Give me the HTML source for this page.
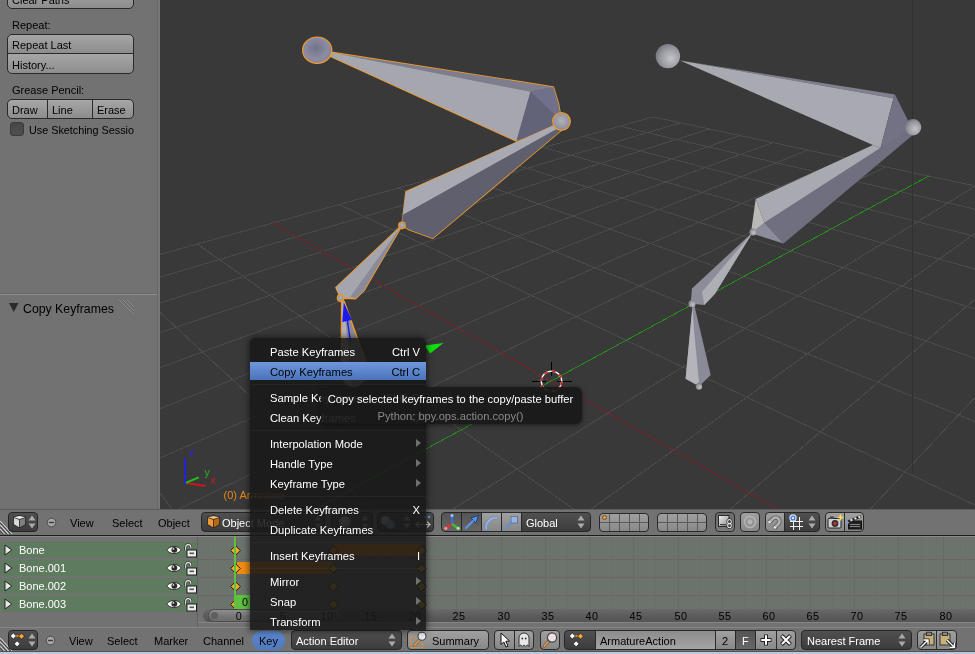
<!DOCTYPE html>
<html><head><meta charset="utf-8"><title>Blender</title><style>
*{box-sizing:border-box;margin:0;padding:0}
html,body{width:975px;height:654px;overflow:hidden;background:#727272}
body{position:relative;font-family:"Liberation Sans",sans-serif;font-size:11px;color:#000;line-height:1}
.a{position:absolute}
.t{position:absolute;white-space:pre;line-height:12px;height:12px}
.btn{position:absolute;border:1px solid #2a2a2a;background:linear-gradient(#a6a6a6,#8d8d8d);}
.dk{position:absolute;border:1px solid #262626;background:linear-gradient(#505050,#3c3c3c);color:#fff}
.lt{position:absolute;border:1px solid #2a2a2a;background:linear-gradient(#a0a0a0,#888888)}
.hdr{position:absolute;left:0;width:975px;background:#727272}
.row{position:absolute;left:0;width:197px;height:16px;background:#5f7b5f;border-radius:5px 0 0 5px}
.row .t{color:#fff;left:19px;top:2px}
.mi{position:absolute;left:0;width:176px;height:20px;color:#fff;font-size:11.2px}
.mi .t{left:20px;top:4px}
.mi .k{position:absolute;right:6px;top:4px;line-height:12px;white-space:pre}
.mi .ar{position:absolute;right:5px;top:5px;width:0;height:0;border-left:5px solid #707070;border-top:4.5px solid transparent;border-bottom:4.5px solid transparent}
.sep{position:absolute;left:0;width:176px;height:1px;background:rgba(60,60,60,.3)}
</style></head><body><div id="root" style="position:absolute;left:0;top:0;width:975px;height:654px;will-change:transform">

<div class="a" style="left:0;top:0;width:158px;height:509px;background:#727272;overflow:hidden">
 <div class="btn" style="left:7px;top:-12px;width:127px;height:21px;border-radius:5px"><span class="t" style="left:4px;top:5px">Clear Paths</span></div>
 <span class="t" style="left:12px;top:19px">Repeat:</span>
 <div class="btn" style="left:7px;top:34px;width:127px;height:20px;border-radius:5px 5px 0 0"><span class="t" style="left:4px;top:4px">Repeat Last</span></div>
 <div class="btn" style="left:7px;top:53px;width:127px;height:21px;border-radius:0 0 5px 5px"><span class="t" style="left:4px;top:5px">History...</span></div>
 <span class="t" style="left:12px;top:84px">Grease Pencil:</span>
 <div class="btn" style="left:7px;top:99px;width:41px;height:20px;border-radius:5px 0 0 5px"><span class="t" style="left:4px;top:4px">Draw</span></div>
 <div class="btn" style="left:47px;top:99px;width:46px;height:20px;border-radius:0"><span class="t" style="left:4px;top:4px">Line</span></div>
 <div class="btn" style="left:92px;top:99px;width:42px;height:20px;border-radius:0 5px 5px 0"><span class="t" style="left:4px;top:4px">Erase</span></div>
 <div class="a" style="left:10px;top:122px;width:14px;height:14px;border-radius:3px;border:1px solid #3a3a3a;background:linear-gradient(#464646,#505050)"></div>
 <div class="a" style="left:29px;top:124px;width:105px;height:14px;overflow:hidden"><span class="t" style="left:0;top:0;font-size:10.8px">Use Sketching Session</span></div>
 <div class="a" style="left:0;top:294px;width:158px;height:1px;background:#8c8c8c"></div>
 <div class="a" style="left:0;top:293px;width:158px;height:1px;background:#6a6a6a"></div>
 <svg class="a" style="left:8px;top:302px" width="12" height="11" viewBox="0 0 12 11"><path d="M1 1 H10.5 L5.75 10 Z" fill="#2b2b2b"/></svg>
 <span class="t" style="left:23px;top:302px;font-size:12.3px;line-height:14px;height:14px">Copy Keyframes</span>
 <svg class="a" style="left:118px;top:299px" width="18" height="18" viewBox="0 0 18 18"><path d="M1 1 L16 16 M5 1 L16 12 M9 1 L16 8" stroke="#8e8e8e" stroke-width="1" fill="none"/><path d="M1 2 L16 17 M5 2 L16 13 M9 2 L16 9" stroke="#5e5e5e" stroke-width="1" fill="none" opacity=".6"/></svg>
</div>
<div class="a" style="left:157px;top:0;width:1px;height:509px;background:#686868"></div>
<div class="a" style="left:158px;top:0;width:2px;height:509px;background:#787878"></div>

<svg id="vp" width="815" height="509" viewBox="0 0 815 509" style="position:absolute;left:160px;top:0;background:#393939;font-family:'Liberation Sans',sans-serif">
<defs>
<radialGradient id="sph" cx="0.45" cy="0.42" r="0.7"><stop offset="0" stop-color="#727288"/><stop offset="0.6" stop-color="#8c8ca4"/><stop offset="1" stop-color="#7c7c94"/></radialGradient>
<radialGradient id="sphb" cx="0.5" cy="0.45" r="0.7"><stop offset="0" stop-color="#b2b2b8"/><stop offset="0.6" stop-color="#9494a2"/><stop offset="1" stop-color="#6c6c82"/></radialGradient>
<radialGradient id="sph2" cx="0.62" cy="0.6" r="0.8"><stop offset="0" stop-color="#c4c4c8"/><stop offset="0.5" stop-color="#9a9aa2"/><stop offset="1" stop-color="#62626e"/></radialGradient>
</defs>
<g stroke-width="1" shape-rendering="crispEdges"><line x1="-977.2" y1="526.9" x2="493.3" y2="116.9" stroke="#4a4a4a"/><line x1="-977.2" y1="526.9" x2="-14997.7" y2="15857.6" stroke="#4a4a4a"/><line x1="-1027.3" y1="581.6" x2="520.6" y2="122.8" stroke="#4a4a4a"/><line x1="-741.7" y1="461.2" x2="-9785.1" y2="15785.1" stroke="#4a4a4a"/><line x1="-1087.2" y1="647.1" x2="549.5" y2="129.0" stroke="#4a4a4a"/><line x1="-550.6" y1="408.0" x2="-4572.5" y2="15712.6" stroke="#4a4a4a"/><line x1="-1160.3" y1="727.1" x2="580.3" y2="135.6" stroke="#4a4a4a"/><line x1="-392.5" y1="363.9" x2="640.1" y2="15640.1" stroke="#4a4a4a"/><line x1="-1251.5" y1="826.8" x2="613.0" y2="142.6" stroke="#4a4a4a"/><line x1="-259.4" y1="326.8" x2="1259.5" y2="4114.4" stroke="#4a4a4a"/><line x1="-1368.4" y1="954.6" x2="648.0" y2="150.1" stroke="#4a4a4a"/><line x1="-146.0" y1="295.1" x2="1270.4" y2="2215.4" stroke="#4a4a4a"/><line x1="-1523.6" y1="1124.4" x2="685.5" y2="158.2" stroke="#4a4a4a"/><line x1="-48.1" y1="267.8" x2="1274.5" y2="1495.5" stroke="#4a4a4a"/><line x1="-1739.9" y1="1360.8" x2="725.6" y2="166.8" stroke="#4a4a4a"/><line x1="37.3" y1="244.0" x2="1276.6" y2="1116.7" stroke="#4a4a4a"/><line x1="-2592.0" y1="2292.5" x2="815.3" y2="186.0" stroke="#4a4a4a"/><line x1="179.0" y1="204.5" x2="1278.9" y2="724.4" stroke="#4a4a4a"/><line x1="-3628.9" y1="3426.4" x2="865.7" y2="196.9" stroke="#4a4a4a"/><line x1="238.3" y1="188.0" x2="1279.5" y2="609.8" stroke="#4a4a4a"/><line x1="-6564.8" y1="6636.6" x2="920.3" y2="208.6" stroke="#4a4a4a"/><line x1="291.7" y1="173.1" x2="1280.0" y2="523.0" stroke="#4a4a4a"/><line x1="-13633.3" y1="15838.6" x2="979.7" y2="221.3" stroke="#4a4a4a"/><line x1="339.8" y1="159.7" x2="1280.4" y2="455.1" stroke="#4a4a4a"/><line x1="-9926.5" y1="15787.1" x2="1044.7" y2="235.3" stroke="#4a4a4a"/><line x1="383.5" y1="147.5" x2="1280.7" y2="400.4" stroke="#4a4a4a"/><line x1="-6219.8" y1="15735.5" x2="1115.9" y2="250.6" stroke="#4a4a4a"/><line x1="423.4" y1="136.4" x2="1281.0" y2="355.5" stroke="#4a4a4a"/><line x1="-2513.0" y1="15683.9" x2="1194.4" y2="267.4" stroke="#4a4a4a"/><line x1="459.8" y1="126.2" x2="1281.2" y2="318.0" stroke="#4a4a4a"/><line x1="1193.7" y1="15632.3" x2="1281.4" y2="286.1" stroke="#4a4a4a"/><line x1="493.3" y1="116.9" x2="1281.4" y2="286.1" stroke="#4a4a4a"/><line x1="-2061.8" y1="1712.8" x2="768.8" y2="176.0" stroke="#258c1c"/><line x1="112.4" y1="223.1" x2="1278.0" y2="883.0" stroke="#742428"/></g>
<line x1="752.5" y1="0" x2="752.5" y2="473" stroke="#303030" shape-rendering="crispEdges"/>
<polygon points="720.5,148.0 604.4,222.8 623.5,243.4 754.0,134.0 748.0,126.0" fill="#6f6f80" /><polygon points="604.4,222.8 592.9,231.9 595.0,234.5 623.5,243.4" fill="#8c8c9a" /><polygon points="712.9,145.0 595.7,199.0 604.4,222.8 720.5,148.0" fill="#a9a9b1" /><polygon points="595.7,199.0 604.4,222.8 592.9,231.9 591.5,229.0" fill="#b9b9b8" /><polygon points="520.0,60.5 735.0,94.5 733.5,98.3" fill="#80808f" /><polygon points="520.0,60.5 733.5,98.3 720.5,148.0 712.9,145.0" fill="#a9a9b1" /><polygon points="735.0,94.5 748.0,120.5 753.1,127.3 746.0,131.5 720.5,148.0 733.5,98.3" fill="#727284" /><polygon points="592.9,231.9 532.0,288.5 530.9,300.8 532.0,303.7 544.3,305.0 555.0,293.8" fill="#8d8d9a" /><polygon points="592.9,231.9 542.0,292.0 544.3,305.0 555.0,293.8" fill="#aeaeb5" /><polygon points="532.5,306.0 525.6,378.7 536.0,384.5 541.0,384.5 550.7,375.0 534.5,306.0" fill="#8a8a98" /><polygon points="532.5,306.0 525.6,378.7 536.0,384.5 539.0,382.0 534.0,330.0" fill="#b4b4ba" /><ellipse cx="507.9" cy="56.1" rx="12.2" ry="12.2" fill="url(#sph2)"/><ellipse cx="753.1" cy="127.3" rx="8.2" ry="8.2" fill="url(#sph2)"/><ellipse cx="592.9" cy="231.9" rx="3.5" ry="3.5" fill="url(#sph2)"/><ellipse cx="532.0" cy="303.7" rx="3.6" ry="3.6" fill="url(#sph2)"/><ellipse cx="539.0" cy="386.5" rx="3.2" ry="3.2" fill="url(#sph2)"/>
<polygon points="171.5,52.4 393.3,87.0 398.5,104.0 401.5,121.5 356.5,141.0 170.5,56.3" fill="#666676" stroke="#f19a2a" stroke-width="1.6" stroke-linejoin="round"/><polygon points="171.5,52.4 393.3,87.0 370.5,91.8" fill="#7d7d8d" /><polygon points="171.5,52.4 370.5,91.8 356.5,141.0 170.5,56.3" fill="#a6a6ae" /><polygon points="370.5,91.8 393.3,87.0 398.5,104.0 401.5,121.5" fill="#70708a" /><polygon points="370.5,91.8 401.5,121.5 398.0,127.0 356.5,141.0" fill="#626278" /><polygon points="398.0,124.0 246.0,191.8 242.0,225.3 249.4,229.8 272.8,238.2 404.0,128.0" fill="#5e5e6c" stroke="#f19a2a" stroke-width="1.6" stroke-linejoin="round"/><polygon points="398.0,123.5 246.0,191.8 242.8,215.0 403.0,125.5" fill="#a9a9b1" /><polygon points="246.0,191.8 242.8,215.0 242.0,225.3" fill="#8d8d9a" /><polygon points="403.0,126.0 242.8,215.0 242.0,225.3 249.4,229.8 272.8,238.2 404.0,128.0" fill="#5f5f6d" /><polygon points="242.0,225.3 176.0,287.5 180.6,298.0 195.5,298.8 204.0,290.5" fill="#a2a2aa" stroke="#f19a2a" stroke-width="1.6" stroke-linejoin="round"/><polygon points="242.0,225.3 176.0,287.5 180.6,298.0 190.5,296.5" fill="#a5a5ad" /><polygon points="242.0,225.3 190.5,296.5 195.5,298.8 204.0,290.5" fill="#8a8a98" /><polygon points="181.6,301.0 181.2,378.0 190.0,387.0 196.0,387.0 210.5,375.0 184.3,301.4" fill="#8c8c98" stroke="#f19a2a" stroke-width="1.4" stroke-linejoin="round"/><polygon points="182.2,302.0 181.9,378.0 190.0,386.5 192.0,385.0 183.6,302.0" fill="#b0b0b6" /><ellipse cx="157.2" cy="50.2" rx="14.6" ry="13.2" fill="url(#sph)" stroke="#f19a2a" stroke-width="1.2"/><ellipse cx="401.5" cy="121.5" rx="8.8" ry="8.8" fill="url(#sphb)" stroke="#f19a2a" stroke-width="1.2"/><ellipse cx="242.0" cy="225.3" rx="3.3" ry="3.3" fill="url(#sphb)" stroke="#f19a2a" stroke-width="1.2"/><ellipse cx="180.6" cy="298.0" rx="3.3" ry="3.3" fill="url(#sphb)" stroke="#f19a2a" stroke-width="1.2"/><line x1="187.3" y1="320" x2="190.60000000000002" y2="342" stroke="#2020e8" stroke-width="1.5"/><polygon points="183.8,302.6 182.3,321.9 191.9,320.0" fill="#1a1af0" /><polygon points="283.5,343.0 264.5,345.5 270.0,353.5" fill="#10e010" />
<g fill="none" shape-rendering="crispEdges"><line x1="371.5" y1="381.5" x2="386.0" y2="381.5" stroke="#000"/><line x1="397.0" y1="381.5" x2="411.5" y2="381.5" stroke="#000"/><line x1="391.5" y1="361.5" x2="391.5" y2="376.0" stroke="#000"/><line x1="391.5" y1="387.0" x2="391.5" y2="401.5" stroke="#000"/></g>
<circle cx="391.5" cy="381.3" r="10.2" fill="none" stroke="#fff" stroke-width="1.4"/><circle cx="391.5" cy="381.3" r="10.2" fill="none" stroke="#e81818" stroke-width="1.4" stroke-dasharray="4 4"/>
<line x1="25.099999999999994" y1="483.1" x2="45.69999999999999" y2="486" stroke="#c81818" stroke-width="2"/>
<line x1="25.099999999999994" y1="483.1" x2="38.80000000000001" y2="477.4" stroke="#18c818" stroke-width="2"/>
<line x1="25.099999999999994" y1="484.1" x2="25.099999999999994" y2="458" stroke="#2222d8" stroke-width="2"/>
<text x="29" y="456" fill="#2a2adc" font-size="10.5">z</text><text x="44.5" y="475.5" fill="#22b422" font-size="10.5">y</text><text x="50.5" y="484" fill="#c81c1c" font-size="10.5">x</text>
<text x="63.5" y="499" fill="#e8861a" font-size="11">(0) Armature</text>
</svg>

<div class="hdr" style="top:509px;height:26px"></div>
<div class="a" style="left:0;top:509px;width:975px;height:1px;background:#5c5c5c"></div>
<div class="a" style="left:0;top:535px;width:975px;height:1px;background:#1c1c1c"></div>
<svg class="a" style="left:0;top:521px" width="14" height="14" viewBox="0 0 14 14"><path d="M0 0 L12 13 M0 4 L8.5 13 M0 8 L4.5 13" stroke="#d8d8d8" stroke-width="1.1" fill="none"/><path d="M0 1.5 L11 13.5 M0 5.5 L7.5 13.5 M0 9.5 L3.5 13.5" stroke="#3a3a3a" stroke-width="1" fill="none"/></svg>
<div class="dk" style="left:8px;top:512px;width:30px;height:20px;border-radius:4px"></div>
<svg class="a" style="left:12px;top:514px" width="15" height="15" viewBox="0 0 14 14"><path d="M1 2.5 L7 1 L13 2.5 V10 L7 13.5 L1 10 Z" fill="#2a2a2a"/><path d="M1.8 3 L7 1.8 L12.2 3 L7 4.6 Z" fill="#f0f0f0"/><path d="M1.8 3.8 L6.6 5.3 V12.4 L1.8 9.6 Z" fill="#d8d8d8"/><path d="M12.2 3.8 L7.4 5.3 V12.4 L12.2 9.6 Z" fill="#808080"/></svg>
<svg class="a" style="left:28px;top:515px" width="8" height="14" viewBox="0 0 8 14"><path d="M4 0.5 L7.5 5.5 H0.5 Z M4 13.5 L7.5 8.5 H0.5 Z" fill="#aaaaaa"/></svg>
<svg class="a" style="left:46px;top:517px" width="11" height="11" viewBox="0 0 11 11"><circle cx="5.5" cy="5.5" r="4.3" fill="#a8a8a8" stroke="#444" stroke-width="0.9"/><rect x="2.9" y="4.8" width="5.2" height="1.4" fill="#3a3a3a"/></svg>
<span class="t" style="left:70px;top:517px">View</span>
<span class="t" style="left:112px;top:517px">Select</span>
<span class="t" style="left:158px;top:517px">Object</span>
<div class="dk" style="left:201px;top:512px;width:124px;height:20px;border-radius:4px"><span class="t" style="left:20px;top:4px">Object Mode</span></div>
<svg class="a" style="left:206px;top:514px" width="15" height="15" viewBox="0 0 14 14"><path d="M1 2.5 L7 1 L13 2.5 V10 L7 13.5 L1 10 Z" fill="#2a2a2a"/><path d="M1.8 3 L7 1.8 L12.2 3 L7 4.6 Z" fill="#f6c080"/><path d="M1.8 3.8 L6.6 5.3 V12.4 L1.8 9.6 Z" fill="#f09830"/><path d="M12.2 3.8 L7.4 5.3 V12.4 L12.2 9.6 Z" fill="#b86a10"/></svg>
<svg class="a" style="left:314px;top:515px" width="8" height="14" viewBox="0 0 8 14"><path d="M4 0.5 L7.5 5.5 H0.5 Z M4 13.5 L7.5 8.5 H0.5 Z" fill="#aaaaaa"/></svg>
<div class="dk" style="left:331px;top:512px;width:42px;height:20px;border-radius:4px"></div>
<div class="a" style="left:339px;top:516px;width:12px;height:12px;border-radius:6px;background:radial-gradient(circle at 40% 35%,#eee,#888)"></div>
<svg class="a" style="left:361px;top:515px" width="8" height="14" viewBox="0 0 8 14"><path d="M4 0.5 L7.5 5.5 H0.5 Z M4 13.5 L7.5 8.5 H0.5 Z" fill="#aaaaaa"/></svg>
<div class="dk" style="left:377px;top:512px;width:36px;height:20px;border-radius:4px 0 0 4px"></div>
<div class="a" style="left:381px;top:516px;width:9px;height:9px;border-radius:5px;background:#c8c8c8"></div><div class="a" style="left:386px;top:520px;width:9px;height:9px;border-radius:5px;background:#88a8d8"></div>
<svg class="a" style="left:403px;top:515px" width="8" height="14" viewBox="0 0 8 14"><path d="M4 0.5 L7.5 5.5 H0.5 Z M4 13.5 L7.5 8.5 H0.5 Z" fill="#aaaaaa"/></svg>
<div class="dk" style="left:412px;top:512px;width:22px;height:20px;border-radius:0 4px 4px 0"></div>
<svg class="a" style="left:414px;top:514px" width="18" height="16" viewBox="0 0 18 16"><path d="M2 10.5 H16 M5 7.5 L2 10.5 L5 13.5 M13 7.5 L16 10.5 L13 13.5" stroke="#d0d0d0" stroke-width="1.2" fill="none"/><circle cx="11" cy="3" r="1.3" fill="#6aa0e8"/><circle cx="15" cy="3" r="1.3" fill="#6aa0e8"/></svg>

<div class="dk" style="left:441px;top:512px;width:21px;height:20px;border-radius:4px 0 0 4px;background:linear-gradient(#555,#666)"></div>
<div class="dk" style="left:461px;top:512px;width:21px;height:20px;border-radius:0;background:linear-gradient(#555,#666)"></div>
<div class="lt" style="left:481px;top:512px;width:21px;height:20px;border-radius:0"></div>
<div class="lt" style="left:501px;top:512px;width:21px;height:20px;border-radius:0"></div>
<svg class="a" style="left:443px;top:513px" width="18" height="18" viewBox="0 0 18 18"><path d="M9 11 V2" stroke="#3c6ce0" stroke-width="2.2"/><path d="M9 11 L2.5 15.5" stroke="#e03030" stroke-width="2.2"/><path d="M9 11 L15.5 15.5" stroke="#40c030" stroke-width="2.2"/><circle cx="9" cy="2.5" r="1.6" fill="#a0c0ff"/><circle cx="2.8" cy="15.3" r="1.6" fill="#ff9090"/><circle cx="15.2" cy="15.3" r="1.6" fill="#a0f090"/></svg>
<svg class="a" style="left:463px;top:514px" width="17" height="17" viewBox="0 0 17 17"><path d="M2 15 L4 13 L10.5 6.5 L8 4 L15.5 1.5 L13 9 L10.5 6.5" fill="#5a94e8" stroke="#1c3c80" stroke-width="1"/><path d="M2.2 14.8 L10.5 6.5" stroke="#5a94e8" stroke-width="2.2"/></svg>
<svg class="a" style="left:483px;top:514px" width="17" height="17" viewBox="0 0 17 17"><path d="M3 15 C3 8 7 4 14 3.5" stroke="#6f8fc0" stroke-width="3.2" fill="none" stroke-linecap="round"/><path d="M3 15 C3 8 7 4 14 3.5" stroke="#9ab4dc" stroke-width="1.6" fill="none" stroke-linecap="round"/></svg>
<svg class="a" style="left:503px;top:514px" width="17" height="17" viewBox="0 0 17 17"><path d="M2.5 14.5 L9 8" stroke="#6f8fc0" stroke-width="3" stroke-linecap="round"/><rect x="8" y="2.5" width="6.5" height="6.5" fill="#9ab4dc" stroke="#5a78a8" stroke-width="1"/></svg>
<div class="dk" style="left:521px;top:512px;width:70px;height:20px;border-radius:0 4px 4px 0"><span class="t" style="left:4px;top:4px">Global</span></div>
<svg class="a" style="left:577px;top:515px" width="8" height="14" viewBox="0 0 8 14"><path d="M4 0.5 L7.5 5.5 H0.5 Z M4 13.5 L7.5 8.5 H0.5 Z" fill="#aaaaaa"/></svg>
<div class="lt" style="left:599px;top:513px;width:50px;height:19px;border-radius:4px;overflow:hidden"><div class="a" style="left:8.5px;top:0;width:1px;height:17px;background:#5a5a5a"></div><div class="a" style="left:18.5px;top:0;width:1px;height:17px;background:#5a5a5a"></div><div class="a" style="left:28.5px;top:0;width:1px;height:17px;background:#5a5a5a"></div><div class="a" style="left:38.5px;top:0;width:1px;height:17px;background:#5a5a5a"></div><div class="a" style="left:0;top:8px;width:48px;height:1px;background:#5a5a5a"></div></div>
<div class="a" style="left:602px;top:515px;width:5px;height:5px;border-radius:3px;background:#f0a040;border:1px solid #7a4a10"></div>
<div class="lt" style="left:657px;top:513px;width:50px;height:19px;border-radius:4px;overflow:hidden"><div class="a" style="left:8.5px;top:0;width:1px;height:17px;background:#5a5a5a"></div><div class="a" style="left:18.5px;top:0;width:1px;height:17px;background:#5a5a5a"></div><div class="a" style="left:28.5px;top:0;width:1px;height:17px;background:#5a5a5a"></div><div class="a" style="left:38.5px;top:0;width:1px;height:17px;background:#5a5a5a"></div><div class="a" style="left:0;top:8px;width:48px;height:1px;background:#5a5a5a"></div></div>
<div class="lt" style="left:715px;top:512px;width:20px;height:20px;border-radius:4px;background:linear-gradient(#6c6c6c,#7a7a7a)"></div>
<svg class="a" style="left:717px;top:514px" width="17" height="16" viewBox="0 0 17 16"><defs><linearGradient id="lg1" x1="0" y1="0" x2="1" y2="1"><stop offset="0" stop-color="#f4f4f4"/><stop offset="1" stop-color="#8a8a8a"/></linearGradient></defs><rect x="1.5" y="1.5" width="10.5" height="11" fill="url(#lg1)" stroke="#2a2a2a" stroke-width="1"/><rect x="3" y="10" width="6" height="1.2" fill="#444"/><path d="M12.5 5.5 a1.8 2.2 0 1 1 0 4.4 a1.8 2.2 0 1 1 0 -4.4 M12.5 9.3 a1.8 2.2 0 1 1 0 4.4 a1.8 2.2 0 1 1 0 -4.4" stroke="#1e1e1e" stroke-width="2.4" fill="none"/><path d="M12.5 5.5 a1.8 2.2 0 1 1 0 4.4 a1.8 2.2 0 1 1 0 -4.4 M12.5 9.3 a1.8 2.2 0 1 1 0 4.4 a1.8 2.2 0 1 1 0 -4.4" stroke="#f0f0f0" stroke-width="1.1" fill="none"/></svg>
<div class="lt" style="left:740px;top:512px;width:20px;height:20px;border-radius:4px"></div>
<svg class="a" style="left:742px;top:514px" width="16" height="16" viewBox="0 0 16 16"><circle cx="8" cy="8" r="5.5" fill="none" stroke="#b4b4b4" stroke-width="1.6"/><circle cx="8" cy="8" r="2.5" fill="#b4b4b4"/></svg>
<div class="lt" style="left:765px;top:512px;width:20px;height:20px;border-radius:4px 0 0 4px"></div>
<svg class="a" style="left:766px;top:513px" width="18" height="18" viewBox="0 0 18 18"><g transform="rotate(45 9 9)"><path d="M5.2 14 V8 A3.8 3.8 0 0 1 12.8 8 V14" stroke="#5a5a5a" stroke-width="4.2" fill="none"/><path d="M5.2 13.6 V8 A3.8 3.8 0 0 1 12.8 8 V13.6" stroke="#b2b2b2" stroke-width="2.6" fill="none"/><path d="M3.9 12.2 h2.6 v1.6 h-2.6z M11.5 12.2 h2.6 v1.6 h-2.6z" fill="#eaeaea"/></g></svg>
<div class="dk" style="left:784px;top:512px;width:36px;height:20px;border-radius:0 4px 4px 0"></div>
<svg class="a" style="left:787px;top:513px" width="18" height="18" viewBox="0 0 18 18"><path d="M6.5 6 V16.5 M12.5 3.5 V16.5 M3 8.5 H16 M3 13.5 H16" stroke="#f0f0f0" stroke-width="1" fill="none" shape-rendering="crispEdges"/><circle cx="6" cy="5" r="3.1" fill="#4a80e0" stroke="#d8e6ff" stroke-width="1.1"/><circle cx="6" cy="5" r="1.1" fill="#fff"/></svg>
<svg class="a" style="left:808px;top:515px" width="8" height="14" viewBox="0 0 8 14"><path d="M4 0.5 L7.5 5.5 H0.5 Z M4 13.5 L7.5 8.5 H0.5 Z" fill="#aaaaaa"/></svg>
<div class="lt" style="left:825px;top:512px;width:20px;height:20px;border-radius:4px 0 0 4px"></div>
<div class="lt" style="left:844px;top:512px;width:20px;height:20px;border-radius:0 4px 4px 0"></div>
<svg class="a" style="left:827px;top:514px" width="17" height="16" viewBox="0 0 17 16"><rect x="1" y="4.5" width="13" height="9.5" rx="1" fill="#d0d0d0" stroke="#222" stroke-width="1"/><rect x="3" y="2.5" width="4" height="2.5" fill="#444"/><circle cx="8" cy="9.5" r="3.4" fill="#333"/><circle cx="8" cy="9.5" r="1.8" fill="#c03030"/><path d="M13.5 0.5 V6.5 M10.5 3.5 H16.5" stroke="#f8e060" stroke-width="1.6"/></svg>
<svg class="a" style="left:846px;top:514px" width="17" height="16" viewBox="0 0 17 16"><rect x="2.5" y="7" width="13" height="8" fill="#222" stroke="#111"/><path d="M1.5 6.5 L14.5 1 L15.5 3.5 L2.5 9 Z" fill="#222"/><path d="M4 5.6 l2 -0.8 l0.8 1.8 l-2 0.8z M8 4 l2 -0.8 l0.8 1.8 l-2 0.8z M12 2.4 l2 -0.8 l0.8 1.8 l-2 0.8z" fill="#e8e8e8"/><path d="M4 10.5 H14 M4 12.5 H14" stroke="#999" stroke-width="0.8"/><path d="M1 6 l2.5 3 l-2.5 1z" fill="#70a0ff"/></svg>

<div class="a" style="left:0;top:536px;width:975px;height:91px;background:#727272"></div><div class="a" style="left:0;top:536px;width:975px;height:1px;background:#8a8a8a"></div><div class="a" style="left:198px;top:537px;width:777px;height:72px;background:#6c726c"></div><div class="a" style="left:213px;top:537px;width:1px;height:72px;background:#696f69"></div><div class="a" style="left:236px;top:537px;width:1px;height:72px;background:#656b65"></div><div class="a" style="left:258px;top:537px;width:1px;height:72px;background:#696f69"></div><div class="a" style="left:280px;top:537px;width:1px;height:72px;background:#656b65"></div><div class="a" style="left:302px;top:537px;width:1px;height:72px;background:#696f69"></div><div class="a" style="left:324px;top:537px;width:1px;height:72px;background:#656b65"></div><div class="a" style="left:346px;top:537px;width:1px;height:72px;background:#696f69"></div><div class="a" style="left:368px;top:537px;width:1px;height:72px;background:#656b65"></div><div class="a" style="left:390px;top:537px;width:1px;height:72px;background:#696f69"></div><div class="a" style="left:412px;top:537px;width:1px;height:72px;background:#656b65"></div><div class="a" style="left:434px;top:537px;width:1px;height:72px;background:#696f69"></div><div class="a" style="left:456px;top:537px;width:1px;height:72px;background:#656b65"></div><div class="a" style="left:479px;top:537px;width:1px;height:72px;background:#696f69"></div><div class="a" style="left:501px;top:537px;width:1px;height:72px;background:#656b65"></div><div class="a" style="left:523px;top:537px;width:1px;height:72px;background:#696f69"></div><div class="a" style="left:545px;top:537px;width:1px;height:72px;background:#656b65"></div><div class="a" style="left:567px;top:537px;width:1px;height:72px;background:#696f69"></div><div class="a" style="left:589px;top:537px;width:1px;height:72px;background:#656b65"></div><div class="a" style="left:611px;top:537px;width:1px;height:72px;background:#696f69"></div><div class="a" style="left:633px;top:537px;width:1px;height:72px;background:#656b65"></div><div class="a" style="left:655px;top:537px;width:1px;height:72px;background:#696f69"></div><div class="a" style="left:678px;top:537px;width:1px;height:72px;background:#656b65"></div><div class="a" style="left:700px;top:537px;width:1px;height:72px;background:#696f69"></div><div class="a" style="left:722px;top:537px;width:1px;height:72px;background:#656b65"></div><div class="a" style="left:744px;top:537px;width:1px;height:72px;background:#696f69"></div><div class="a" style="left:766px;top:537px;width:1px;height:72px;background:#656b65"></div><div class="a" style="left:788px;top:537px;width:1px;height:72px;background:#696f69"></div><div class="a" style="left:810px;top:537px;width:1px;height:72px;background:#656b65"></div><div class="a" style="left:832px;top:537px;width:1px;height:72px;background:#696f69"></div><div class="a" style="left:854px;top:537px;width:1px;height:72px;background:#656b65"></div><div class="a" style="left:876px;top:537px;width:1px;height:72px;background:#696f69"></div><div class="a" style="left:898px;top:537px;width:1px;height:72px;background:#656b65"></div><div class="a" style="left:921px;top:537px;width:1px;height:72px;background:#696f69"></div><div class="a" style="left:943px;top:537px;width:1px;height:72px;background:#656b65"></div><div class="a" style="left:965px;top:537px;width:1px;height:72px;background:#696f69"></div><div class="a" style="left:198px;top:559px;width:777px;height:1px;background:#6b6668"></div><div class="a" style="left:198px;top:577px;width:777px;height:1px;background:#6b6668"></div><div class="a" style="left:198px;top:595px;width:777px;height:1px;background:#6b6668"></div><div class="a" style="left:197px;top:537px;width:1px;height:90px;background:#626262"></div><div class="row" style="top:542px"><span class="t">Bone</span></div><svg class="a" style="left:4px;top:544px" width="9" height="12" viewBox="0 0 9 12"><path d="M1 1 L7.8 6 L1 11 Z" fill="#e8e8e8" stroke="#222" stroke-width="1"/></svg><svg class="a" style="left:165.5px;top:545px" width="16" height="10" viewBox="0 0 16 10"><path d="M0.8 5 C4 0.2 12 0.2 15.2 5 C12 9.8 4 9.8 0.8 5Z" fill="#f4f4f4" stroke="#2a2a2a" stroke-width="0.9"/><circle cx="8.3" cy="4.8" r="2.9" fill="#2a2a2a"/><circle cx="7.4" cy="3.9" r="0.9" fill="#ddd"/></svg><svg class="a" style="left:182.5px;top:543px" width="15" height="15" viewBox="0 0 14 15"><path d="M2.2 7.5 V4.2 A2.6 2.6 0 0 1 7.4 4.2 V5" stroke="#1e1e1e" stroke-width="2.4" fill="none"/><path d="M2.2 7.5 V4.2 A2.6 2.6 0 0 1 7.4 4.2 V5" stroke="#f0f0f0" stroke-width="1.1" fill="none"/><rect x="3.5" y="7" width="9.5" height="7" fill="#ececec" stroke="#1e1e1e" stroke-width="1"/><rect x="6" y="9.5" width="4.5" height="1.6" fill="#555"/></svg><div class="row" style="top:560px"><span class="t">Bone.001</span></div><svg class="a" style="left:4px;top:562px" width="9" height="12" viewBox="0 0 9 12"><path d="M1 1 L7.8 6 L1 11 Z" fill="#e8e8e8" stroke="#222" stroke-width="1"/></svg><svg class="a" style="left:165.5px;top:563px" width="16" height="10" viewBox="0 0 16 10"><path d="M0.8 5 C4 0.2 12 0.2 15.2 5 C12 9.8 4 9.8 0.8 5Z" fill="#f4f4f4" stroke="#2a2a2a" stroke-width="0.9"/><circle cx="8.3" cy="4.8" r="2.9" fill="#2a2a2a"/><circle cx="7.4" cy="3.9" r="0.9" fill="#ddd"/></svg><svg class="a" style="left:182.5px;top:561px" width="15" height="15" viewBox="0 0 14 15"><path d="M2.2 7.5 V4.2 A2.6 2.6 0 0 1 7.4 4.2 V5" stroke="#1e1e1e" stroke-width="2.4" fill="none"/><path d="M2.2 7.5 V4.2 A2.6 2.6 0 0 1 7.4 4.2 V5" stroke="#f0f0f0" stroke-width="1.1" fill="none"/><rect x="3.5" y="7" width="9.5" height="7" fill="#ececec" stroke="#1e1e1e" stroke-width="1"/><rect x="6" y="9.5" width="4.5" height="1.6" fill="#555"/></svg><div class="row" style="top:578px"><span class="t">Bone.002</span></div><svg class="a" style="left:4px;top:580px" width="9" height="12" viewBox="0 0 9 12"><path d="M1 1 L7.8 6 L1 11 Z" fill="#e8e8e8" stroke="#222" stroke-width="1"/></svg><svg class="a" style="left:165.5px;top:581px" width="16" height="10" viewBox="0 0 16 10"><path d="M0.8 5 C4 0.2 12 0.2 15.2 5 C12 9.8 4 9.8 0.8 5Z" fill="#f4f4f4" stroke="#2a2a2a" stroke-width="0.9"/><circle cx="8.3" cy="4.8" r="2.9" fill="#2a2a2a"/><circle cx="7.4" cy="3.9" r="0.9" fill="#ddd"/></svg><svg class="a" style="left:182.5px;top:579px" width="15" height="15" viewBox="0 0 14 15"><path d="M2.2 7.5 V4.2 A2.6 2.6 0 0 1 7.4 4.2 V5" stroke="#1e1e1e" stroke-width="2.4" fill="none"/><path d="M2.2 7.5 V4.2 A2.6 2.6 0 0 1 7.4 4.2 V5" stroke="#f0f0f0" stroke-width="1.1" fill="none"/><rect x="3.5" y="7" width="9.5" height="7" fill="#ececec" stroke="#1e1e1e" stroke-width="1"/><rect x="6" y="9.5" width="4.5" height="1.6" fill="#555"/></svg><div class="row" style="top:596px"><span class="t">Bone.003</span></div><svg class="a" style="left:4px;top:598px" width="9" height="12" viewBox="0 0 9 12"><path d="M1 1 L7.8 6 L1 11 Z" fill="#e8e8e8" stroke="#222" stroke-width="1"/></svg><svg class="a" style="left:165.5px;top:599px" width="16" height="10" viewBox="0 0 16 10"><path d="M0.8 5 C4 0.2 12 0.2 15.2 5 C12 9.8 4 9.8 0.8 5Z" fill="#f4f4f4" stroke="#2a2a2a" stroke-width="0.9"/><circle cx="8.3" cy="4.8" r="2.9" fill="#2a2a2a"/><circle cx="7.4" cy="3.9" r="0.9" fill="#ddd"/></svg><svg class="a" style="left:182.5px;top:597px" width="15" height="15" viewBox="0 0 14 15"><path d="M2.2 7.5 V4.2 A2.6 2.6 0 0 1 7.4 4.2 V5" stroke="#1e1e1e" stroke-width="2.4" fill="none"/><path d="M2.2 7.5 V4.2 A2.6 2.6 0 0 1 7.4 4.2 V5" stroke="#f0f0f0" stroke-width="1.1" fill="none"/><rect x="3.5" y="7" width="9.5" height="7" fill="#ececec" stroke="#1e1e1e" stroke-width="1"/><rect x="6" y="9.5" width="4.5" height="1.6" fill="#555"/></svg><div class="a" style="left:198px;top:609px;width:777px;height:18px;background:#727272"></div><div class="a" style="left:203px;top:609px;width:790px;height:13px;border-radius:7px;background:linear-gradient(#6a6a6a,#5a5a5a 60%,#555)"></div><div class="a" style="left:208px;top:609px;width:133px;height:13px;border-radius:7px;background:linear-gradient(#8e8e8e,#747474 60%,#6c6c6c);border:1px solid #4c4c4c"></div><div class="a" style="left:211px;top:612px;width:7px;height:7px;border-radius:4px;background:#5e5e5e"></div><div class="a" style="left:331px;top:612px;width:7px;height:7px;border-radius:4px;background:#5e5e5e"></div><div class="a" style="left:198px;top:622px;width:777px;height:1px;background:#858585"></div><span class="t" style="left:224px;top:610px;width:30px;text-align:center;color:#000;letter-spacing:0.5px;font-size:10.8px">0</span><span class="t" style="left:268px;top:610px;width:30px;text-align:center;color:#000;letter-spacing:0.5px;font-size:10.8px">5</span><span class="t" style="left:312px;top:610px;width:30px;text-align:center;color:#000;letter-spacing:0.5px;font-size:10.8px">10</span><span class="t" style="left:356px;top:610px;width:30px;text-align:center;color:#000;letter-spacing:0.5px;font-size:10.8px">15</span><span class="t" style="left:400px;top:610px;width:30px;text-align:center;color:#000;letter-spacing:0.5px;font-size:10.8px">20</span><span class="t" style="left:444px;top:610px;width:30px;text-align:center;color:#000;letter-spacing:0.5px;font-size:10.8px">25</span><span class="t" style="left:489px;top:610px;width:30px;text-align:center;color:#000;letter-spacing:0.5px;font-size:10.8px">30</span><span class="t" style="left:533px;top:610px;width:30px;text-align:center;color:#000;letter-spacing:0.5px;font-size:10.8px">35</span><span class="t" style="left:577px;top:610px;width:30px;text-align:center;color:#000;letter-spacing:0.5px;font-size:10.8px">40</span><span class="t" style="left:621px;top:610px;width:30px;text-align:center;color:#000;letter-spacing:0.5px;font-size:10.8px">45</span><span class="t" style="left:666px;top:610px;width:30px;text-align:center;color:#000;letter-spacing:0.5px;font-size:10.8px">50</span><span class="t" style="left:710px;top:610px;width:30px;text-align:center;color:#000;letter-spacing:0.5px;font-size:10.8px">55</span><span class="t" style="left:754px;top:610px;width:30px;text-align:center;color:#000;letter-spacing:0.5px;font-size:10.8px">60</span><span class="t" style="left:798px;top:610px;width:30px;text-align:center;color:#000;letter-spacing:0.5px;font-size:10.8px">65</span><span class="t" style="left:842px;top:610px;width:30px;text-align:center;color:#000;letter-spacing:0.5px;font-size:10.8px">70</span><span class="t" style="left:886px;top:610px;width:30px;text-align:center;color:#000;letter-spacing:0.5px;font-size:10.8px">75</span><span class="t" style="left:931px;top:610px;width:30px;text-align:center;color:#000;letter-spacing:0.5px;font-size:10.8px">80</span><div class="a" style="left:237px;top:562px;width:96px;height:12px;background:#f08c14"></div><div class="a" style="left:333px;top:544px;width:89px;height:12px;background:#f08c14"></div><svg class="a" style="left:229.5px;top:544.5px;opacity:1" width="11" height="11" viewBox="0 0 10 10"><path d="M5 0.6 L9.4 5 L5 9.4 L0.6 5 Z" fill="#f0b020" stroke="#1a1a1a" stroke-width="0.9"/></svg><svg class="a" style="left:327.5px;top:544.5px;opacity:1" width="11" height="11" viewBox="0 0 10 10"><path d="M5 0.6 L9.4 5 L5 9.4 L0.6 5 Z" fill="#f0b020" stroke="#1a1a1a" stroke-width="0.9"/></svg><svg class="a" style="left:415.5px;top:544.5px;opacity:1" width="11" height="11" viewBox="0 0 10 10"><path d="M5 0.6 L9.4 5 L5 9.4 L0.6 5 Z" fill="#f0b020" stroke="#1a1a1a" stroke-width="0.9"/></svg><svg class="a" style="left:229.5px;top:562.5px;opacity:1" width="11" height="11" viewBox="0 0 10 10"><path d="M5 0.6 L9.4 5 L5 9.4 L0.6 5 Z" fill="#f0b020" stroke="#1a1a1a" stroke-width="0.9"/></svg><svg class="a" style="left:327.5px;top:562.5px;opacity:1" width="11" height="11" viewBox="0 0 10 10"><path d="M5 0.6 L9.4 5 L5 9.4 L0.6 5 Z" fill="#f0b020" stroke="#1a1a1a" stroke-width="0.9"/></svg><svg class="a" style="left:415.5px;top:562.5px;opacity:1" width="11" height="11" viewBox="0 0 10 10"><path d="M5 0.6 L9.4 5 L5 9.4 L0.6 5 Z" fill="#f0b020" stroke="#1a1a1a" stroke-width="0.9"/></svg><svg class="a" style="left:229.5px;top:580.5px;opacity:1" width="11" height="11" viewBox="0 0 10 10"><path d="M5 0.6 L9.4 5 L5 9.4 L0.6 5 Z" fill="#f0b020" stroke="#1a1a1a" stroke-width="0.9"/></svg><svg class="a" style="left:327.5px;top:580.5px;opacity:1" width="11" height="11" viewBox="0 0 10 10"><path d="M5 0.6 L9.4 5 L5 9.4 L0.6 5 Z" fill="#f0b020" stroke="#1a1a1a" stroke-width="0.9"/></svg><svg class="a" style="left:415.5px;top:580.5px;opacity:1" width="11" height="11" viewBox="0 0 10 10"><path d="M5 0.6 L9.4 5 L5 9.4 L0.6 5 Z" fill="#f0b020" stroke="#1a1a1a" stroke-width="0.9"/></svg><svg class="a" style="left:229.5px;top:598.5px;opacity:1" width="11" height="11" viewBox="0 0 10 10"><path d="M5 0.6 L9.4 5 L5 9.4 L0.6 5 Z" fill="#f0b020" stroke="#1a1a1a" stroke-width="0.9"/></svg><svg class="a" style="left:327.5px;top:598.5px;opacity:1" width="11" height="11" viewBox="0 0 10 10"><path d="M5 0.6 L9.4 5 L5 9.4 L0.6 5 Z" fill="#f0b020" stroke="#1a1a1a" stroke-width="0.9"/></svg><svg class="a" style="left:415.5px;top:598.5px;opacity:1" width="11" height="11" viewBox="0 0 10 10"><path d="M5 0.6 L9.4 5 L5 9.4 L0.6 5 Z" fill="#f0b020" stroke="#1a1a1a" stroke-width="0.9"/></svg><div class="a" style="left:234px;top:537px;width:2px;height:72px;background:#60c040"></div><div class="a" style="left:234px;top:595px;width:17px;height:14px;background:#60c040"></div><span class="t" style="left:242px;top:596px;font-size:10.8px">0</span>

<div class="hdr" style="top:627px;height:25px"></div>
<div class="a" style="left:0;top:627px;width:975px;height:1px;background:#868686"></div>
<div class="a" style="left:0;top:651px;width:975px;height:1px;background:#50545a"></div>
<div class="a" style="left:0;top:652px;width:975px;height:2px;background:#b6c8e0"></div>
<svg class="a" style="left:0;top:638px" width="14" height="14" viewBox="0 0 14 14"><path d="M0 0 L12 13 M0 4 L8.5 13 M0 8 L4.5 13" stroke="#d8d8d8" stroke-width="1.1" fill="none"/><path d="M0 1.5 L11 13.5 M0 5.5 L7.5 13.5 M0 9.5 L3.5 13.5" stroke="#3a3a3a" stroke-width="1" fill="none"/></svg>
<div class="dk" style="left:8px;top:630px;width:30px;height:20px;border-radius:4px"></div>
<svg class="a" style="left:9px;top:632px" width="17" height="16" viewBox="0 0 17 16"><path d="M6.5 3 L11 3.3 L11 5 L6.5 4.8Z" fill="#e89030"/><path d="M1.2 4 L4.3 1 L7.4 4 L4.3 7 Z" fill="#fafafa" stroke="#1a1a1a" stroke-width=".8"/><path d="M9.4 4.2 L12.5 1.2 L15.6 4.2 L12.5 7.2 Z" fill="#f8a838" stroke="#1a1a1a" stroke-width=".8"/><path d="M5 11.8 L8.1 8.8 L11.2 11.8 L8.1 14.8 Z" fill="#fafafa" stroke="#1a1a1a" stroke-width=".8"/></svg>
<svg class="a" style="left:28px;top:633px" width="8" height="14" viewBox="0 0 8 14"><path d="M4 0.5 L7.5 5.5 H0.5 Z M4 13.5 L7.5 8.5 H0.5 Z" fill="#aaaaaa"/></svg>
<svg class="a" style="left:45px;top:635px" width="11" height="11" viewBox="0 0 11 11"><circle cx="5.5" cy="5.5" r="4.3" fill="#a8a8a8" stroke="#444" stroke-width="0.9"/><rect x="2.9" y="4.8" width="5.2" height="1.4" fill="#3a3a3a"/></svg>
<span class="t" style="left:69px;top:635px">View</span>
<span class="t" style="left:107px;top:635px">Select</span>
<span class="t" style="left:154px;top:635px">Marker</span>
<span class="t" style="left:203px;top:635px">Channel</span>
<div class="a" style="left:252px;top:631px;width:33px;height:19px;border-radius:9px;background:linear-gradient(#5b86d0,#5078bc)"></div>
<span class="t" style="left:259px;top:635px">Key</span>
<div class="dk" style="left:291px;top:630px;width:111px;height:20px;border-radius:4px"><span class="t" style="left:4px;top:4px">Action Editor</span></div>
<svg class="a" style="left:388px;top:633px" width="8" height="14" viewBox="0 0 8 14"><path d="M4 0.5 L7.5 5.5 H0.5 Z M4 13.5 L7.5 8.5 H0.5 Z" fill="#aaaaaa"/></svg>
<div class="lt" style="left:407px;top:630px;width:82px;height:20px;border-radius:4px"><span class="t" style="left:24px;top:4px">Summary</span></div>
<svg class="a" style="left:410px;top:631px" width="20" height="18" viewBox="0 0 20 18"><rect x="1" y="5.5" width="11.5" height="11" fill="none" stroke="#f09020" stroke-width="1.2" stroke-dasharray="2.2 1.4"/><path d="M4.5 14.5 L9.5 8.5" stroke="#8a5a2a" stroke-width="2.6" stroke-linecap="round"/><path d="M4.5 14.5 L9.5 8.5" stroke="#e0a060" stroke-width="1.2" stroke-linecap="round"/><circle cx="12" cy="5.2" r="4" fill="#e8e8ee" stroke="#444" stroke-width="1.1"/></svg>
<div class="lt" style="left:494px;top:630px;width:21px;height:20px;border-radius:4px 0 0 4px"></div>
<div class="lt" style="left:514px;top:630px;width:20px;height:20px;border-radius:0 4px 4px 0"></div>
<svg class="a" style="left:499px;top:632px" width="12" height="16" viewBox="0 0 12 16"><path d="M2 1 V12.5 L4.8 10 L7 15 L9 14.2 L6.8 9.3 L10.5 9 Z" fill="#fff" stroke="#111" stroke-width="1"/></svg>
<svg class="a" style="left:517px;top:632px" width="14" height="16" viewBox="0 0 14 16"><path d="M2 14.5 V6 A5 5 0 0 1 12 6 V14.5 L10.3 13 L8.7 14.5 L7 13 L5.3 14.5 L3.7 13 Z" fill="#e8e8e8" stroke="#333" stroke-width="1"/><circle cx="5.3" cy="6.5" r="0.9" fill="#333"/><circle cx="8.7" cy="6.5" r="0.9" fill="#333"/></svg>
<div class="lt" style="left:540px;top:630px;width:20px;height:20px;border-radius:4px"></div>
<svg class="a" style="left:541px;top:631px" width="18" height="18" viewBox="0 0 18 18"><path d="M3 15.5 L8 10" stroke="#8a5a2a" stroke-width="3" stroke-linecap="round"/><path d="M3 15.5 L8 10" stroke="#e0a060" stroke-width="1.4" stroke-linecap="round"/><circle cx="11" cy="6.5" r="4.6" fill="#e4e4ec" stroke="#444" stroke-width="1.2"/><circle cx="11" cy="6.5" r="3" fill="#f8d8d8" opacity=".6"/></svg>
<div class="dk" style="left:564px;top:630px;width:32px;height:20px;border-radius:4px 0 0 4px"></div>
<svg class="a" style="left:568px;top:632px" width="17" height="16" viewBox="0 0 17 16"><path d="M6.5 3 L11 3.3 L11 5 L6.5 4.8Z" fill="#e89030"/><path d="M1.2 4 L4.3 1 L7.4 4 L4.3 7 Z" fill="#fafafa" stroke="#1a1a1a" stroke-width=".8"/><path d="M9.4 4.2 L12.5 1.2 L15.6 4.2 L12.5 7.2 Z" fill="#f8a838" stroke="#1a1a1a" stroke-width=".8"/><path d="M5 11.8 L8.1 8.8 L11.2 11.8 L8.1 14.8 Z" fill="#fafafa" stroke="#1a1a1a" stroke-width=".8"/></svg>
<div class="a" style="left:595px;top:630px;width:121px;height:20px;border:1px solid #2a2a2a;background:linear-gradient(#8c8c8c,#a4a4a4)"><span class="t" style="left:4px;top:4px">ArmatureAction</span></div>
<div class="lt" style="left:715px;top:630px;width:21px;height:20px"><span class="t" style="left:6px;top:4px">2</span></div>
<div class="dk" style="left:735px;top:630px;width:21px;height:20px;background:linear-gradient(#555,#666)"><span class="t" style="left:6px;top:4px">F</span></div>
<div class="lt" style="left:755px;top:630px;width:22px;height:20px"></div>
<div class="lt" style="left:776px;top:630px;width:20px;height:20px;border-radius:0 4px 4px 0"></div>
<svg class="a" style="left:759px;top:633px" width="14" height="14" viewBox="0 0 14 14"><path d="M7 1.5 V12.5 M1.5 7 H12.5" stroke="#222" stroke-width="4"/><path d="M7 2.3 V11.7 M2.3 7 H11.7" stroke="#fff" stroke-width="2"/></svg>
<svg class="a" style="left:779px;top:633px" width="14" height="14" viewBox="0 0 14 14"><path d="M2.5 2.5 L11.5 11.5 M11.5 2.5 L2.5 11.5" stroke="#222" stroke-width="4"/><path d="M3 3 L11 11 M11 3 L3 11" stroke="#fff" stroke-width="2"/></svg>
<div class="dk" style="left:801px;top:630px;width:111px;height:20px;border-radius:4px"><span class="t" style="left:5px;top:4px">Nearest Frame</span></div>
<svg class="a" style="left:898px;top:633px" width="8" height="14" viewBox="0 0 8 14"><path d="M4 0.5 L7.5 5.5 H0.5 Z M4 13.5 L7.5 8.5 H0.5 Z" fill="#aaaaaa"/></svg>
<div class="lt" style="left:917px;top:630px;width:20px;height:20px;border-radius:4px 0 0 4px"></div>
<div class="lt" style="left:936px;top:630px;width:21px;height:20px;border-radius:0 4px 4px 0"></div>
<svg class="a" style="left:919px;top:631px" width="17" height="18" viewBox="0 0 17 18"><rect x="5" y="3" width="10" height="11" fill="#c8b078" stroke="#333" stroke-width="1"/><rect x="7.5" y="1.2" width="5" height="3.4" fill="#888" stroke="#222" stroke-width=".8"/><path d="M1.5 16.5 L8.5 9.5 M4.5 9 H9 V13.5" stroke="#222" stroke-width="3.2" fill="none"/><path d="M1.5 16.5 L8.5 9.5 M4.5 9 H9 V13.5" stroke="#fff" stroke-width="1.4" fill="none"/></svg>
<svg class="a" style="left:938px;top:631px" width="18" height="18" viewBox="0 0 18 18"><rect x="2" y="3" width="10" height="11" fill="#c8b078" stroke="#333" stroke-width="1"/><rect x="4.5" y="1.2" width="5" height="3.4" fill="#888" stroke="#222" stroke-width=".8"/><path d="M9 9 L16 16 M11.5 16.5 H16.5 V11.5" stroke="#222" stroke-width="3.2" fill="none"/><path d="M9 9 L16 16 M11.5 16.5 H16.5 V11.5" stroke="#fff" stroke-width="1.4" fill="none"/></svg>

<div class="a" style="left:250px;top:338px;width:176px;height:292px;background:rgba(24,24,24,0.88);border-radius:5px 5px 0 0;box-shadow:0 0 6px 1px rgba(0,0,0,.55)"><div class="mi" style="top:4px;"><span class="t" style="top:4px">Paste Keyframes</span><span class="k" style="top:4px">Ctrl V</span></div><div class="mi" style="top:24px;background:linear-gradient(#6e97de,#4b73b9);color:#000;height:18px"><span class="t" style="top:4px">Copy Keyframes</span><span class="k" style="top:4px">Ctrl C</span></div><div class="mi" style="top:50px;"><span class="t" style="top:4px">Sample Keyframes</span><span class="k" style="top:4px">Shift O</span></div><div class="mi" style="top:70px;"><span class="t" style="top:4px">Clean Keyframes</span><span class="k" style="top:4px">O</span></div><div class="mi" style="top:96px;"><span class="t" style="top:4px">Interpolation Mode</span><span class="ar"></span></div><div class="mi" style="top:116px;"><span class="t" style="top:4px">Handle Type</span><span class="ar"></span></div><div class="mi" style="top:136px;"><span class="t" style="top:4px">Keyframe Type</span><span class="ar"></span></div><div class="mi" style="top:162px;"><span class="t" style="top:4px">Delete Keyframes</span><span class="k" style="top:4px">X</span></div><div class="mi" style="top:182px;"><span class="t" style="top:4px">Duplicate Keyframes</span><span class="k" style="top:4px"></span></div><div class="mi" style="top:208px;"><span class="t" style="top:4px">Insert Keyframes</span><span class="k" style="top:4px">I</span></div><div class="mi" style="top:234px;"><span class="t" style="top:4px">Mirror</span><span class="ar"></span></div><div class="mi" style="top:254px;"><span class="t" style="top:4px">Snap</span><span class="ar"></span></div><div class="mi" style="top:274px;"><span class="t" style="top:4px">Transform</span><span class="ar"></span></div><div class="sep" style="top:46px"></div><div class="sep" style="top:92px"></div><div class="sep" style="top:158px"></div><div class="sep" style="top:204px"></div><div class="sep" style="top:230px"></div></div>
<div class="a" style="left:321px;top:387px;width:261px;height:37px;background:rgba(25,25,25,0.93);border-radius:6px;box-shadow:0 1px 5px rgba(0,0,0,.5);color:#fff;text-align:center">
<span class="t" style="left:0;width:259px;top:6px;font-size:11.2px">Copy selected keyframes to the copy/paste buffer</span>
<span class="t" style="left:0;width:259px;top:23px;color:#8a8a8a;font-size:11.15px">Python: bpy.ops.action.copy()</span></div>
</div></body></html>
